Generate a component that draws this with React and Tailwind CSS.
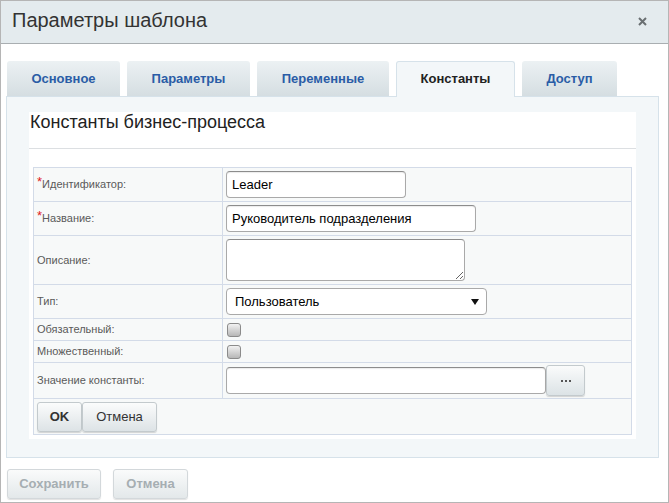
import React from 'react';

const tabs = [
  { label: 'Основное', w: 'w-[113px]' },
  { label: 'Параметры', w: 'w-[123px]' },
  { label: 'Переменные', w: 'w-[132px]' },
  { label: 'Константы', w: 'w-[119px]', active: true },
  { label: 'Доступ', w: 'w-[95px]' },
];

const Label = ({ children, required }) => (
  <div className="w-[189px] shrink-0 self-stretch flex items-center border-r border-[#d3dbe8] pl-[3px] text-[11px] text-[#5a5a5a]">
    {required && <span className="relative top-[-3px] text-[13px] leading-none text-[#e02020]">*</span>}
    {children}
  </div>
);

const Row = ({ h, children, last }) => (
  <div className={`flex items-center ${h} ${last ? '' : 'border-b border-[#d3dbe8]'}`}>{children}</div>
);

const inputCls =
  'h-[27px] rounded-[4px] border border-[#a9a9a9] border-t-[#8c8c8c] bg-white shadow-[inset_0_1px_1px_rgba(0,0,0,0.08)] flex items-center px-[5px] text-[13px] text-black';

const Checkbox = () => (
  <div className="ml-[1px] w-[14px] h-[14px] rounded-[3px] border border-[#8b8b8b] bg-gradient-to-b from-[#f2f2f2] to-[#b7b7b7]" />
);

export default function App() {
  return (
    <div className="w-[669px] h-[503px] border border-[#b5b5b5] bg-white flex flex-col font-['Liberation_Sans',Arial,sans-serif]">
      {/* header */}
      <div className="h-[43px] shrink-0 border-b border-[#a9aeb1] bg-[#e4ebee] flex items-center justify-between pl-[11px] pr-[21px]">
        <span className="text-[20px] text-[#333] mt-[-4px]">Параметры шаблона</span>
        <svg width="9" height="9" viewBox="0 0 9 9" className="mt-[-2px]">
          <path d="M1 1L8 8M8 1L1 8" stroke="#6a6f72" strokeWidth="2" />
        </svg>
      </div>

      <div className="pl-[5px] pt-[17px]">
        {/* tabs */}
        <div className="flex gap-[7px] pl-[1px]">
          {tabs.map((t) =>
            t.active ? (
              <div
                key={t.label}
                className={`${t.w} h-[36px] -mb-[1px] relative z-10 rounded-t-[3px] border border-b-0 border-[#d6e2ea] bg-[#f3f7f9] flex items-center justify-center pb-[1px] text-[13px] font-bold text-[#222]`}
              >
                {t.label}
              </div>
            ) : (
              <div
                key={t.label}
                className={`${t.w} h-[35px] rounded-t-[3px] bg-gradient-to-b from-[#ecf1f3] to-[#d5dee2] flex items-center justify-center text-[13px] font-bold text-[#2a5ca6]`}
              >
                {t.label}
              </div>
            )
          )}
        </div>

        {/* panel */}
        <div className="w-[653px] h-[362px] border border-[#d6e2ea] bg-[#f3f7f9] pl-[22px] pt-[15px]">
          <div className="w-[607px] h-[327px] bg-white">
            <div className="h-[37px] border-b border-[#dcdfe2] pl-[1px] text-[18px] leading-[20px] text-[#222]">
              Константы бизнес-процесса
            </div>

            <div className="ml-[4px] mt-[18px] w-[599px] border border-[#d3dbe8] bg-[#f7f9f9]">
              <Row h="h-[34px]">
                <Label required>Идентификатор:</Label>
                <div className="pl-[3px]">
                  <div className={`${inputCls} w-[180px]`}>Leader</div>
                </div>
              </Row>
              <Row h="h-[34px]">
                <Label required>Название:</Label>
                <div className="pl-[3px]">
                  <div className={`${inputCls} w-[250px]`}>Руководитель подразделения</div>
                </div>
              </Row>
              <Row h="h-[49px]">
                <Label>Описание:</Label>
                <div className="pl-[3px] flex">
                  <textarea
                    readOnly
                    className="w-[239px] h-[42px] rounded-[4px] border border-[#a9a9a9] border-t-[#8c8c8c] bg-white resize outline-none"
                  />
                </div>
              </Row>
              <Row h="h-[34px]">
                <Label>Тип:</Label>
                <div className="pl-[3px]">
                  <div className="w-[261px] h-[27px] rounded-[4px] border border-[#a9a9a9] bg-white flex items-center justify-between pl-[8px] pr-[7px] text-[13px] text-black">
                    <span>Пользователь</span>
                    <svg width="8" height="8" viewBox="0 0 8 8">
                      <path d="M0 1H8L4 7Z" fill="#111" />
                    </svg>
                  </div>
                </div>
              </Row>
              <Row h="h-[22px]">
                <Label>Обязательный:</Label>
                <div className="pl-[3px]">
                  <Checkbox />
                </div>
              </Row>
              <Row h="h-[22px]">
                <Label>Множественный:</Label>
                <div className="pl-[3px]">
                  <Checkbox />
                </div>
              </Row>
              <Row h="h-[36px]">
                <Label>Значение константы:</Label>
                <div className="pl-[3px] flex items-center">
                  <div className={`${inputCls} w-[320px]`} />
                  <div className="w-[39px] h-[31px] rounded-[3px] border border-[#c3cacd] bg-gradient-to-b from-[#fafbfb] to-[#dce3e6] shadow-[0_1px_1px_rgba(0,0,0,0.15)] flex items-center justify-center gap-[2px]">
                    <span className="w-[2px] h-[2px] bg-[#555]" />
                    <span className="w-[2px] h-[2px] bg-[#555]" />
                    <span className="w-[2px] h-[2px] bg-[#555]" />
                  </div>
                </div>
              </Row>
              <Row h="h-[35px]" last>
                <div className="pl-[3px] self-start pt-[3px] flex">
                  <div className="w-[45px] h-[30px] rounded-[3px] border border-[#c3cacd] bg-gradient-to-b from-[#fbfcfc] to-[#dde3e6] shadow-[0_1px_1px_rgba(0,0,0,0.15)] flex items-center justify-center text-[13px] font-bold text-[#333]">
                    OK
                  </div>
                  <div className="w-[75px] h-[30px] rounded-[3px] border border-[#c3cacd] bg-gradient-to-b from-[#fbfcfc] to-[#dde3e6] shadow-[0_1px_1px_rgba(0,0,0,0.15)] flex items-center justify-center text-[13px] text-[#333]">
                    Отмена
                  </div>
                </div>
              </Row>
            </div>
          </div>
        </div>

        {/* footer buttons */}
        <div className="flex gap-[12px] ml-[1px] mt-[11px]">
          <div className="w-[94px] h-[30px] rounded-[3px] border border-[#d3d8db] bg-gradient-to-b from-[#fafbfb] to-[#e3e8ea] shadow-[0_1px_1px_rgba(0,0,0,0.12)] flex items-center justify-center text-[13px] font-bold text-[#a6aeb2]">
            Сохранить
          </div>
          <div className="w-[75px] h-[30px] rounded-[3px] border border-[#d3d8db] bg-gradient-to-b from-[#fafbfb] to-[#e3e8ea] shadow-[0_1px_1px_rgba(0,0,0,0.12)] flex items-center justify-center text-[13px] font-bold text-[#a6aeb2]">
            Отмена
          </div>
        </div>
      </div>
    </div>
  );
}
